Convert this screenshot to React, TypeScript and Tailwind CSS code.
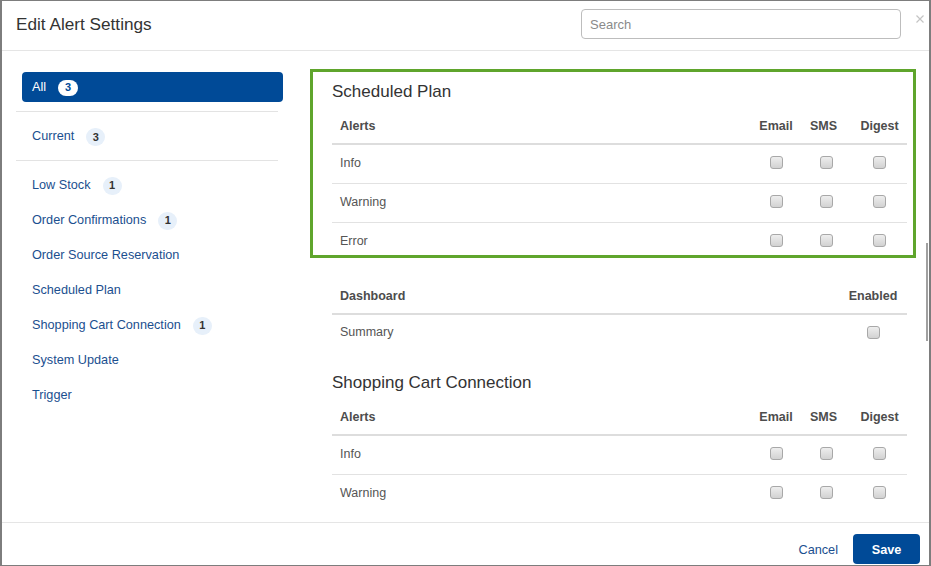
import React from "react";

const FONT = { fontFamily: '"Liberation Sans", Arial, sans-serif' };

function Checkbox() {
  return (
    <span className="inline-block w-[13px] h-[13px] rounded-[3px] border border-[#a8a8a8] bg-linear-to-b from-[#eeeeee] to-[#d2d2d2]" />
  );
}

function Badge({ n, active }: { n: number; active?: boolean }) {
  return active ? (
    <span className="ml-[12px] inline-flex items-center justify-center w-[20px] h-[16px] rounded-full bg-white text-[#004a97] text-[11px] font-bold leading-none">
      {n}
    </span>
  ) : (
    <span className="ml-[12px] inline-flex items-center justify-center w-[19px] h-[18px] rounded-full bg-[#e7f0fa] text-[#333] text-[11px] font-bold leading-none">
      {n}
    </span>
  );
}

const navItems: { label: string; n?: number }[] = [
  { label: "Low Stock", n: 1 },
  { label: "Order Confirmations", n: 1 },
  { label: "Order Source Reservation" },
  { label: "Scheduled Plan" },
  { label: "Shopping Cart Connection", n: 1 },
  { label: "System Update" },
  { label: "Trigger" },
];

function AlertTable({ rows, shortLast }: { rows: string[]; shortLast?: boolean }) {
  return (
    <div className="w-[575px] text-[12.5px] leading-5">
      <div className="flex h-[38px] border-b-2 border-[#dddddd] pt-[9px] font-bold text-[#4d4d4d]">
        <div className="w-[420px] pl-[8px]">Alerts</div>
        <div className="w-[48px] text-center">Email</div>
        <div className="w-[52px] text-center pr-[5px]">SMS</div>
        <div className="w-[55px] text-center">Digest</div>
      </div>
      {rows.map((r, i) => {
        const last = i === rows.length - 1;
        return (
          <div
            key={r}
            className={
              "flex pt-[7px] text-[#555] " +
              (i > 0 ? "border-t border-[#e2e2e2] " : "") +
              (shortLast && last ? "h-[33px]" : i > 0 ? "h-[39px]" : "h-[38px]")
            }
          >
            <div className="w-[420px] pl-[8px] pt-[1px]">{r}</div>
            <div className="w-[48px] flex justify-center items-center h-5">
              <Checkbox />
            </div>
            <div className="w-[52px] flex justify-center items-center h-5">
              <Checkbox />
            </div>
            <div className="w-[55px] flex justify-center items-center h-5">
              <Checkbox />
            </div>
          </div>
        );
      })}
    </div>
  );
}

export default function App() {
  return (
    <div
      style={FONT}
      className="relative w-[931px] h-[566px] bg-white border border-[#7d7d7d] border-l-2 border-r-2 flex flex-col overflow-hidden"
    >
      {/* Header */}
      <div className="h-[50px] shrink-0 border-b border-[#e5e5e5] flex items-start pl-[14px] pr-[5px]">
        <div className="pt-[11px] text-[17.2px] leading-[24px] text-[#333]">Edit Alert Settings</div>
        <div className="flex-1" />
        <div className="mt-[8px] w-[320px] h-[30px] rounded-[4px] border border-[#bdbdbd] flex items-center pl-[8px] pt-[1px] text-[13px] text-[#8a8a8a]">
          Search
        </div>
        <svg className="mt-[14px] ml-[15px]" width="8" height="8" viewBox="0 0 8 8">
          <path d="M0.5 0.5 L7.5 7.5 M7.5 0.5 L0.5 7.5" stroke="#c4c4c4" strokeWidth="1.2" />
        </svg>
      </div>

      {/* Body */}
      <div className="h-[471px] shrink-0 flex overflow-hidden">
        {/* Sidebar */}
        <div className="w-[308px] shrink-0 pt-[21px] pl-[20px] text-[12.7px] text-[#1b4f8f]">
          <div className="w-[261px] h-[30px] rounded-[4px] bg-[#004a97] flex items-center pl-[10px] pt-[1px] text-white">
            All
            <Badge n={3} active />
          </div>
          <div className="-ml-[6px] mt-[9px] w-[262px] h-px bg-[#e3e3e3]" />
          <div className="mt-[10px] h-[30px] flex items-center pl-[10px]">
            Current
            <Badge n={3} />
          </div>
          <div className="-ml-[6px] mt-[8px] w-[262px] h-px bg-[#e3e3e3]" />
          <div className="mt-[7px] flex flex-col">
            {navItems.map((it) => (
              <div key={it.label} className="h-[35px] flex items-center pl-[10px]">
                {it.label}
                {it.n ? <Badge n={it.n} /> : null}
              </div>
            ))}
          </div>
        </div>

        {/* Main */}
        <div className="w-[606px] shrink-0 pt-[18px]">
          <div className="border-[3px] border-[#5fa52c] pl-[19px] pr-[6px] pt-[8px]">
            <div className="h-[24px] mb-[3px] text-[17px] leading-[24px] text-[#333]">Scheduled Plan</div>
            <AlertTable rows={["Info", "Warning", "Error"]} shortLast />
          </div>

          <div className="pl-[22px] pr-[9px] mt-[19px]">
            <div className="w-[575px] text-[12.5px] leading-5">
              <div className="flex h-[38px] border-b-2 border-[#dddddd] pt-[9px] font-bold text-[#4d4d4d]">
                <div className="w-[507px] pl-[8px]">Dashboard</div>
                <div className="w-[68px] text-center">Enabled</div>
              </div>
              <div className="flex h-[38px] pt-[7px] text-[#555]">
                <div className="w-[507px] pl-[8px]">Summary</div>
                <div className="w-[68px] flex justify-center items-center h-5">
                  <Checkbox />
                </div>
              </div>
            </div>

            <div className="mt-[18px] h-[24px] mb-[3px] text-[17px] leading-[24px] text-[#333]">
              Shopping Cart Connection
            </div>
            <AlertTable rows={["Info", "Warning"]} />
          </div>
        </div>
      </div>

      {/* Footer */}
      <div className="flex-1 border-t border-[#e5e5e5] flex justify-end items-start pt-[11px] pr-[9px]">
        <div className="h-[30px] flex items-center text-[12.7px] text-[#1b4f8f] mr-[15px] pt-[4px]">Cancel</div>
        <div className="w-[67px] h-[30px] rounded-[4px] bg-[#004a97] text-white text-[12.7px] font-bold flex items-center justify-center pt-[3px]">
          Save
        </div>
      </div>

      {/* scrollbar thumb */}
      <div className="absolute left-[924px] top-[242px] w-[2px] h-[98px] bg-[#a0a0a0]" />
    </div>
  );
}
